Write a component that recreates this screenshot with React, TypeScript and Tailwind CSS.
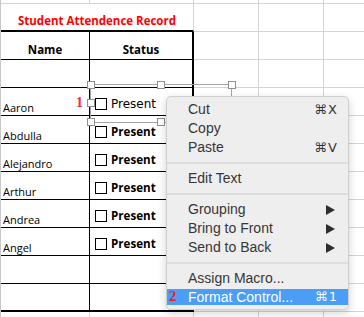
import React from 'react'

const students = ['Aaron', 'Abdulla', 'Alejandro', 'Arthur', 'Andrea', 'Angel']

function Checkbox() {
  return <span className="block w-[12px] h-[12px] border border-black bg-white shrink-0" />
}

function GreyTail({ last = false }: { last?: boolean }) {
  // the empty grey cells to the right of the table
  return (
    <>
      <div className={`w-[65px] shrink-0 border-r border-[#d4d4d4] ${last ? '' : 'border-b'}`} />
      <div className={`w-[65px] shrink-0 border-r border-[#d4d4d4] ${last ? '' : 'border-b'}`} />
      <div className={`flex-1 border-[#d4d4d4] ${last ? '' : 'border-b'}`} />
    </>
  )
}

function Handle({ x, y }: { x: number; y: number }) {
  return (
    <span
      className="absolute w-[8px] h-[8px] bg-white border border-[#8f8f8f]"
      style={{ left: x - 4, top: y - 4 }}
    />
  )
}

type Item = { label: string; shortcut?: string; arrow?: boolean } | 'sep'

const items: Item[] = [
  { label: 'Cut', shortcut: '⌘X' },
  { label: 'Copy' },
  { label: 'Paste', shortcut: '⌘V' },
  'sep',
  { label: 'Edit Text' },
  'sep',
  { label: 'Grouping', arrow: true },
  { label: 'Bring to Front', arrow: true },
  { label: 'Send to Back', arrow: true },
  'sep',
  { label: 'Assign Macro...' },
]

function Arrow() {
  return (
    <svg width="9" height="10" viewBox="0 0 9 10" className="shrink-0">
      <polygon points="0,0 9,5 0,10" fill="#2e2e2e" />
    </svg>
  )
}

function ContextMenu() {
  return (
    <div className="absolute left-[165px] top-[96px] w-[183px] rounded-[5px] bg-[#eeeeee] border border-[#cfcfcf] shadow-[0_3px_10px_rgba(0,0,0,0.18)] pt-[3px] pb-[4px] font-['Liberation_Sans','DejaVu_Sans',sans-serif] text-[14px] text-[#363636]">
      {items.map((it, i) =>
        it === 'sep' ? (
          <div key={i} className="h-[12px] flex items-center">
            <div className="w-full h-[2px] bg-[#dddddd]" />
          </div>
        ) : (
          <div key={i} className="h-[19px] flex items-center pl-[21px] pr-[10px]">
            <span className="flex-1 leading-[19px]">{it.label}</span>
            {it.shortcut && (
              <span className="font-['DejaVu_Sans','Liberation_Sans',sans-serif] text-[13px] tracking-[1px]">{it.shortcut}</span>
            )}
            {it.arrow && <span className="mr-[3px]"><Arrow /></span>}
          </div>
        )
      )}
      <div className="relative h-[16px] mt-[1px] flex items-center pl-[21px] pr-[10px] bg-[#4a9ef6] text-white">
        <span className="absolute left-[2px] top-[-1px] font-['Liberation_Serif',serif] font-bold text-[15px] leading-[16px] text-[#ff1a1a]">2</span>
        <span className="flex-1 leading-[16px]">Format Control...</span>
        <span className="font-['DejaVu_Sans','Liberation_Sans',sans-serif] text-[13px] tracking-[1px]">⌘1</span>
      </div>
    </div>
  )
}

export default function App() {
  return (
    <div className="relative w-[364px] h-[317px] overflow-hidden bg-white border-l border-[#c8c8c8] font-['Open_Sans',sans-serif] text-black">
      {/* partial row above */}
      <div className="flex h-[4px]">
        <div className="w-[89px] shrink-0 border-r border-b border-[#d4d4d4]" />
        <div className="w-[104px] shrink-0 border-r border-b border-[#d4d4d4]" />
        <GreyTail />
      </div>

      {/* title row */}
      <div className="flex h-[28px]">
        <div className="w-[193px] shrink-0 border-r border-r-[#d4d4d4] border-b-2 border-b-black flex items-end justify-center pb-[1px]">
          <span className="text-[11.5px] font-bold leading-[16px] text-[#ff0000]">Student Attendence Record</span>
        </div>
        <GreyTail />
      </div>

      {/* header row */}
      <div className="flex h-[28px]">
        <div className="w-[89px] shrink-0 border-r border-b border-black flex items-end justify-center pb-[1px]">
          <span className="text-[11.5px] font-bold leading-[16px]">Name</span>
        </div>
        <div className="w-[104px] shrink-0 border-r-2 border-b border-black flex items-end justify-center pb-[1px]">
          <span className="text-[11.5px] font-bold leading-[16px]">Status</span>
        </div>
        <GreyTail />
      </div>

      {/* empty row */}
      <div className="flex h-[28px]">
        <div className="w-[89px] shrink-0 border-r border-b border-black" />
        <div className="w-[104px] shrink-0 border-r-2 border-b border-black" />
        <GreyTail />
      </div>

      {students.map((name, i) => (
        <div key={name} className="flex h-[28px]">
          <div className="w-[89px] shrink-0 border-r border-b border-black flex items-end pl-[2px] pb-[0px]">
            <span className="text-[11px] leading-[15px]">{name}</span>
          </div>
          <div className="w-[104px] shrink-0 border-r-2 border-b border-black pt-[9px] pl-[5px]">
            <div className="flex items-center gap-[4px] h-[14px]">
              <Checkbox />
              {i === 0 ? (
                <span className="font-['DejaVu_Sans',sans-serif] text-[12px] leading-[14px]">Present</span>
              ) : (
                <span className="text-[11.6px] font-bold leading-[14px]">Present</span>
              )}
            </div>
          </div>
          <GreyTail />
        </div>
      ))}

      {/* two empty rows, last with thick bottom */}
      <div className="flex h-[28px]">
        <div className="w-[89px] shrink-0 border-r border-b border-black" />
        <div className="w-[104px] shrink-0 border-r-2 border-b border-black" />
        <GreyTail />
      </div>
      <div className="flex h-[28px]">
        <div className="w-[89px] shrink-0 border-r border-b-2 border-black" />
        <div className="w-[104px] shrink-0 border-r-2 border-b-2 border-black" />
        <GreyTail />
      </div>

      {/* partial row below */}
      <div className="flex h-[10px]">
        <div className="w-[89px] shrink-0 border-r border-[#d4d4d4]" />
        <div className="w-[104px] shrink-0 border-r border-[#d4d4d4]" />
        <GreyTail last />
      </div>

      {/* selection frame around the checkbox control */}
      <div className="absolute left-[89px] top-[84px] w-[142px] h-[39px] border border-[#a6a6a6]" />
      <Handle x={90} y={85} />
      <Handle x={160} y={85} />
      <Handle x={231} y={85} />
      <Handle x={90} y={103} />
      <Handle x={90} y={122} />
      <Handle x={160} y={122} />

      <span className="absolute left-[75px] top-[95px] font-['Liberation_Serif',serif] font-bold text-[14px] leading-[16px] text-[#ee2b3b]">1</span>

      <ContextMenu />
    </div>
  )
}
